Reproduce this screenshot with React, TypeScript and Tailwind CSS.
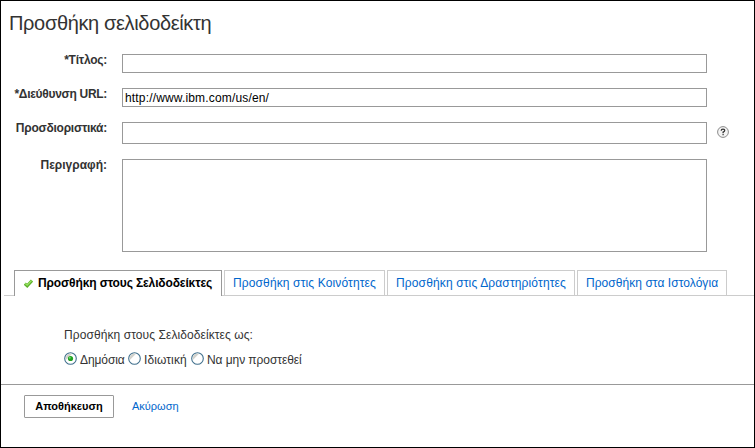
import type { ReactNode } from "react";

function Row({ label, children, height, gap }: { label: ReactNode; children: ReactNode; height: string; gap: string }) {
  return (
    <div className={`flex items-start ${height} ${gap}`}>
      <div className="flex w-[106px] shrink-0 justify-end text-[12px] leading-4 font-bold whitespace-nowrap text-[#333]">
        {label}
      </div>
      <div className="ml-[15px] flex items-center">{children}</div>
    </div>
  );
}

function Radio({ checked = false }: { checked?: boolean }) {
  return (
    <svg width="13" height="13" viewBox="0 0 13 13" className="shrink-0">
      <circle cx="6.5" cy="6.5" r="5.8" fill="#fff" stroke="#3f6f8c" strokeWidth="1.1" />
      <path d="M1.8 8A5 5 0 0 1 8 1.8L1.8 8Z" fill="#d2d2cc" />
      {checked && (
        <>
          <circle cx="6.5" cy="6.5" r="2.6" fill="#21a121" />
          <circle cx="5.8" cy="5.8" r="1" fill="#6fdc6b" />
        </>
      )}
    </svg>
  );
}

function Tab({ width, spacing, children }: { width: string; spacing: string; children: string }) {
  return (
    <button
      className={`h-[26px] ${width} ${spacing} ml-[2px] border border-[#ccc] pl-2 text-left text-[12px] leading-6 whitespace-nowrap text-[#06c]`}
    >
      {children}
    </button>
  );
}

export default function App() {
  return (
    <div className="h-[448px] w-[755px] overflow-hidden border border-black bg-white font-['Liberation_Sans',Arial,sans-serif] text-[#333]">
      <h1 className="mt-[10px] h-6 pl-2 text-[20px] leading-6 tracking-[-0.35px] whitespace-nowrap">
        Προσθήκη σελιδοδείκτη
      </h1>

      <Row label={<span className="tracking-[-0.25px]">*Τίτλος:</span>} height="h-[34px]" gap="mt-[17px]">
        <input className="mt-[2px] h-[19px] w-[585px] border border-[#999]" />
      </Row>
      <Row label={<span className="tracking-[-0.3px]">*Διεύθυνση URL:</span>} height="h-[34px]" gap="mt-0">
        <input
          className="mt-[2px] h-[19px] w-[585px] border border-[#999] px-[2px] text-[12px] tracking-[0.16px] text-black"
          defaultValue="http://www.ibm.com/us/en/"
        />
      </Row>
      <Row label={<span className="tracking-[-0.25px]">Προσδιοριστικά:</span>} height="h-[37px]" gap="mt-0">
        <input className="mt-[2px] h-[22px] w-[585px] border border-[#999]" />
        <svg width="12" height="12" viewBox="0 0 12 12" className="ml-[10px]">
          <circle cx="6" cy="6" r="5.4" fill="#f4f4f4" stroke="#8a8a8a" />
          <path d="M4.2 4.7Q4.2 3.2 6 3.2T7.7 4.6Q7.7 5.5 6.1 6.2V7.2" fill="none" stroke="#333" strokeWidth="1.3" />
          <path d="M5.5 8h1.2v1.2H5.5z" fill="#333" />
        </svg>
      </Row>
      <Row label={<span>Περιγραφή:</span>} height="h-[93px]" gap="mt-0">
        <textarea className="mt-[2px] block h-[93px] w-[585px] resize-none border border-[#999]" />
      </Row>

      <div className="mt-[20px] ml-[3px] flex h-[26px] items-stretch">
        <div className="w-[10px] border-b border-[#ccc]" />
        <button className="flex w-[208px] items-center border border-b-0 border-[#999] pb-px pl-[9px] text-[12px] leading-6 font-bold tracking-[-0.13px] whitespace-nowrap text-black">
          <svg width="9" height="9" viewBox="0 0 9 9" className="mt-px mr-[5px] shrink-0">
            <path d="M.8 4.6 3.2 6.8 8 1.5" fill="none" stroke="#5cb02b" strokeWidth="3" />
            <path d="M1.2 4.5 3.2 6.2 7.6 1.5" fill="none" stroke="#9be466" strokeWidth="1.1" />
          </svg>
          <span>Προσθήκη στους Σελιδοδείκτες</span>
        </button>
        <div className="flex flex-1 shadow-[inset_0_-1px_0_#ccc]">
          <Tab width="w-[161px]" spacing="tracking-[0.13px]">Προσθήκη στις Κοινότητες</Tab>
          <Tab width="w-[188px]" spacing="tracking-[0.14px]">Προσθήκη στις Δραστηριότητες</Tab>
          <Tab width="w-[150px]" spacing="tracking-[0.05px]">Προσθήκη στα Ιστολόγια</Tab>
        </div>
      </div>

      <div className="h-[88px] border-b border-transparent pt-[31px] pl-[63px] text-[12px] leading-4 whitespace-nowrap">
        <p className="tracking-[0.08px]">Προσθήκη στους Σελιδοδείκτες ως:</p>
        <div className="mt-[9px] flex h-[18px] items-start">
          <Radio checked />
          <label className="ml-[3px] w-[48px] tracking-[-0.1px]">Δημόσια</label>
          <Radio />
          <label className="ml-[3px] w-[47px] tracking-[0.1px]">Ιδιωτική</label>
          <Radio />
          <label className="ml-[3px] tracking-[-0.07px]">Να μην προστεθεί</label>
        </div>
      </div>

      <div className="flex items-start border-t border-[#999] pt-[10px] pl-[23px] text-[11px]">
        <button className="h-[23px] w-[90px] rounded-[1px] border border-[#999] text-[11px] leading-[21px] font-bold text-black">
          Αποθήκευση
        </button>
        <a className="ml-[18px] leading-[23px] text-[#06c]">Ακύρωση</a>
      </div>
    </div>
  );
}
